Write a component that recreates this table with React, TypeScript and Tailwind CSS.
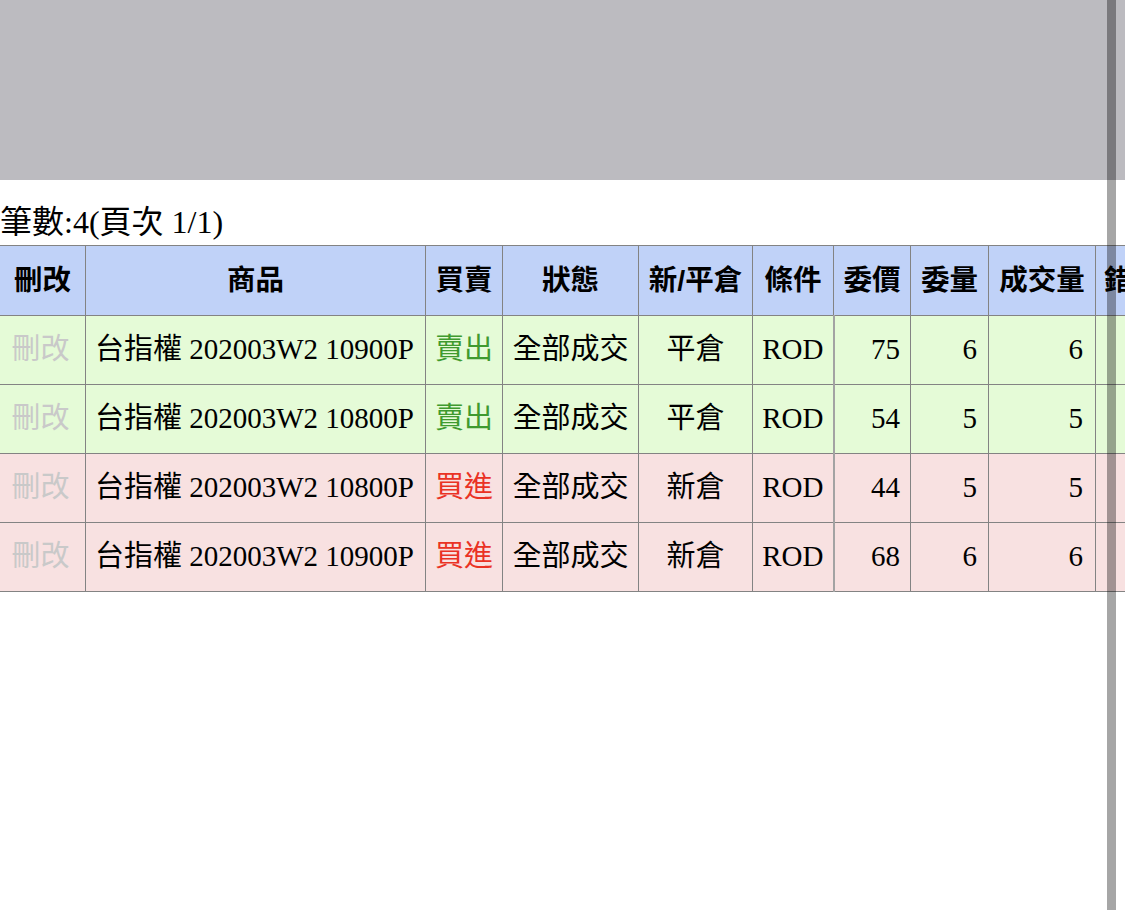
const rows = [
  { name: '台指權 202003W2 10900P', side: '賣出', status: '全部成交', oc: '平倉', cond: 'ROD', price: 75, qty: 6, filled: 6 },
  { name: '台指權 202003W2 10800P', side: '賣出', status: '全部成交', oc: '平倉', cond: 'ROD', price: 54, qty: 5, filled: 5 },
  { name: '台指權 202003W2 10800P', side: '買進', status: '全部成交', oc: '新倉', cond: 'ROD', price: 44, qty: 5, filled: 5 },
  { name: '台指權 202003W2 10900P', side: '買進', status: '全部成交', oc: '新倉', cond: 'ROD', price: 68, qty: 6, filled: 6 },
]

const headers = ['刪改', '商品', '買賣', '狀態', '新/平倉', '條件', '委價', '委量', '成交量', '錯誤訊息']
const widths = ['w-[86px]', 'w-[340px]', 'w-[77px]', 'w-[136px]', 'w-[114px]', 'w-[81px]', 'w-[77px]', 'w-[78px]', 'w-[107px]', 'w-[160px]']

const serif = "font-['Liberation_Serif','Noto_Sans_CJK_TC',serif]"
const sans = "font-['Liberation_Sans','Noto_Sans_CJK_TC',sans-serif]"

export default function App() {
  return (
    <div className={`relative w-[1125px] h-[910px] overflow-hidden bg-white text-black ${serif}`}>
      {/* Top bar */}
      <div className="h-[180px] bg-[#bcbbc0]" />

      {/* Count line */}
      <div className="h-[65px] flex items-end pb-[5px]">
        <span className="text-[32px] leading-[36px] whitespace-nowrap">筆數:4(頁次 1/1)</span>
      </div>

      {/* Orders table */}
      <table className="-ml-px table-fixed border-collapse w-[1256px]">
        <colgroup>
          {widths.map((w, i) => (
            <col key={i} className={w} />
          ))}
        </colgroup>
        <thead>
          <tr className="h-[70px] bg-[#c0d2f8]">
            {headers.map((h, i) => (
              <th
                key={h}
                className={`border border-[#838383] text-[28.5px] font-bold whitespace-nowrap overflow-hidden ${sans} ${
                  i === headers.length - 1 ? 'text-left pl-[8px]' : 'text-center'
                }`}
              >
                {h}
              </th>
            ))}
          </tr>
        </thead>
        <tbody>
          {rows.map((r, i) => {
            const sell = r.side === '賣出'
            return (
              <tr key={i} className={`h-[69px] text-[29px] ${sell ? 'bg-[#e5fbd7]' : 'bg-[#f8e1e1]'}`}>
                <td className="border border-[#838383] text-center pr-[4px] text-[#c9c9c9] whitespace-nowrap">刪改</td>
                <td className="border border-[#838383] pl-[9px] whitespace-nowrap overflow-hidden">{r.name}</td>
                <td className={`border border-[#838383] text-center whitespace-nowrap ${sell ? 'text-[#3f9a2f]' : 'text-[#ea3224]'}`}>
                  {r.side}
                </td>
                <td className="border border-[#838383] text-center whitespace-nowrap">{r.status}</td>
                <td className="border border-[#838383] text-center whitespace-nowrap">{r.oc}</td>
                <td className="border border-[#838383] border-r-2 border-r-[#a3a3a3] text-center">{r.cond}</td>
                <td className="border border-[#838383] text-right pr-[10px]">{r.price}</td>
                <td className="border border-[#838383] text-right pr-[11px]">{r.qty}</td>
                <td className="border border-[#838383] text-right pr-[12px]">{r.filled}</td>
                <td className="border border-[#838383]" />
              </tr>
            )
          })}
        </tbody>
      </table>

      {/* Scroll indicator overlay */}
      <div className="absolute top-0 left-[1107px] w-[9px] h-full bg-black/35" />
    </div>
  )
}
